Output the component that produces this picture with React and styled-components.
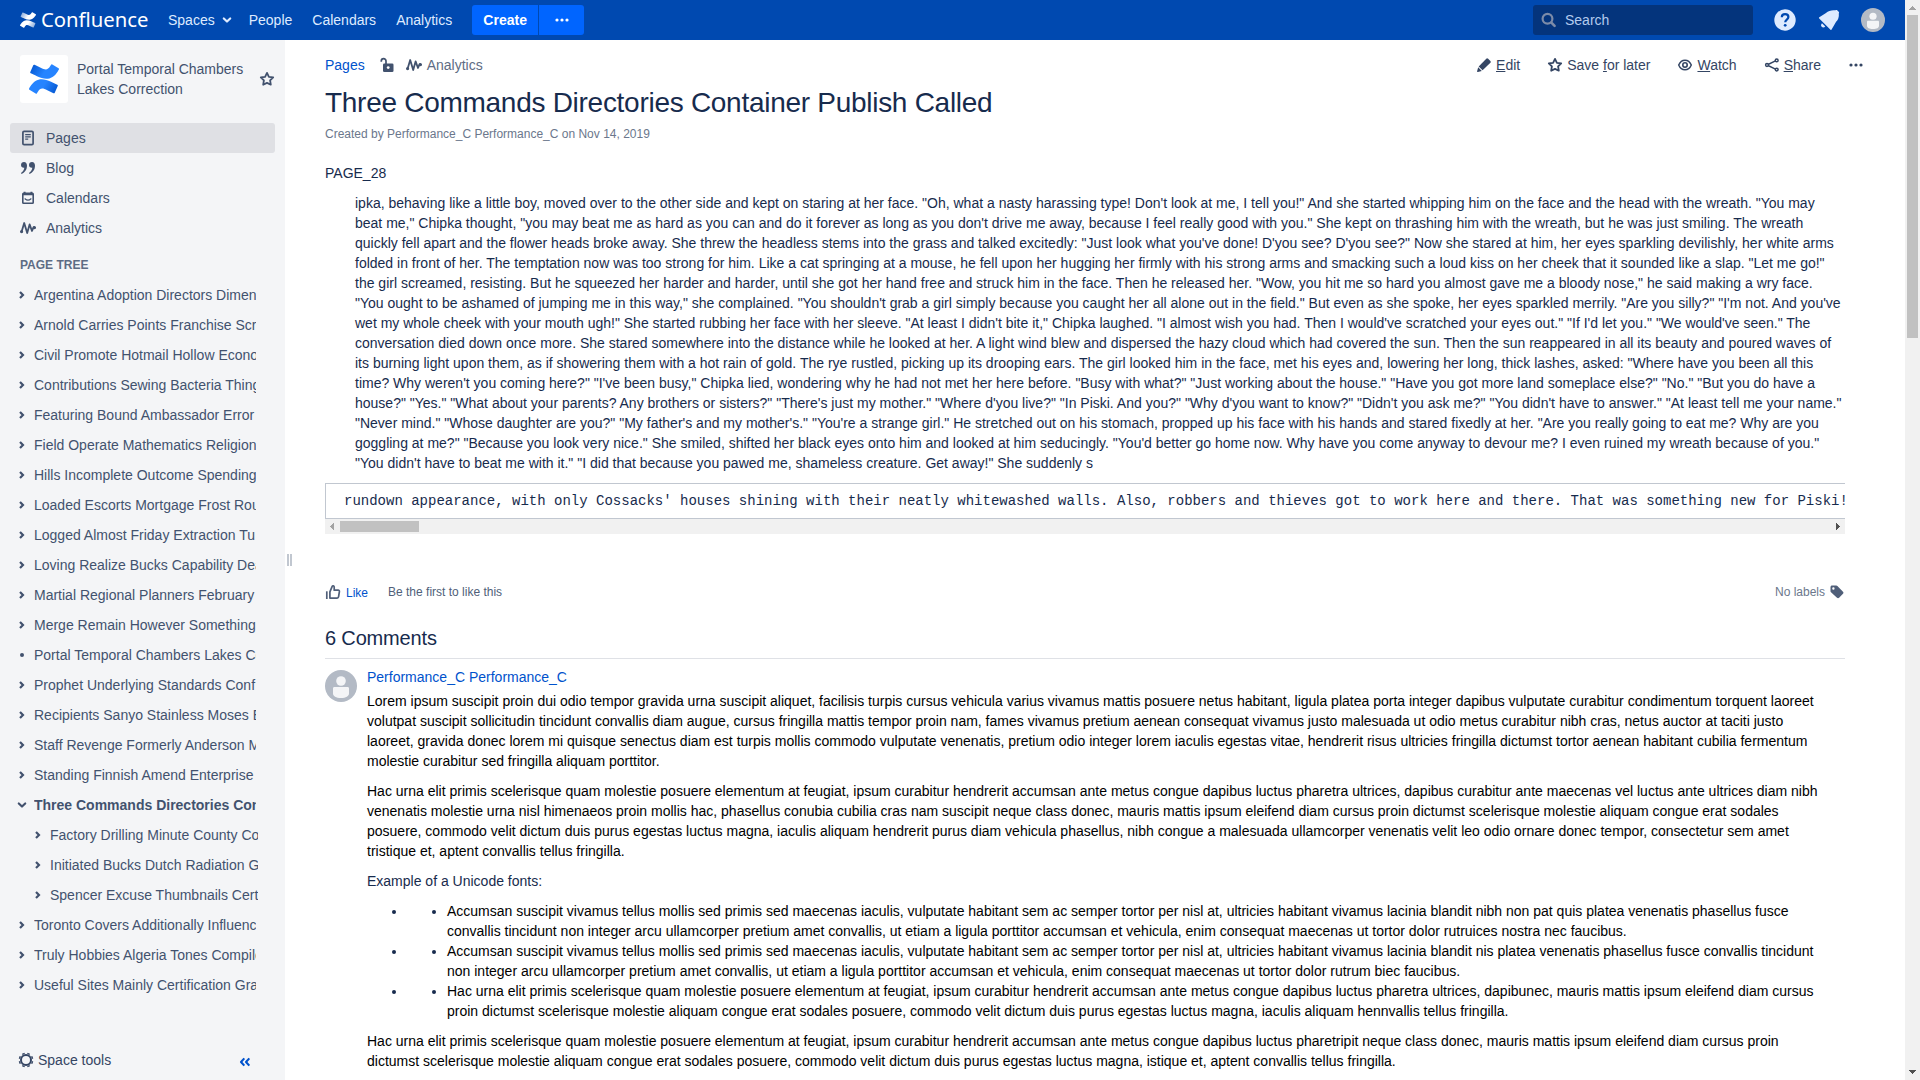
import React from "react";
import styled, { createGlobalStyle, css } from "styled-components";

const Global = createGlobalStyle`
  html, body { margin: 0; padding: 0; height: 100%; overflow: hidden; background: #fff; }
  body { font-family: "Liberation Sans", Arial, sans-serif; font-size: 14px; line-height: 20px; color: #172b4d; }
  * { box-sizing: border-box; }
  svg { display: block; flex: none; }
`;

/* ---------- icons ---------- */

const CONFLUENCE_TOP =
  "M23.131 5.743c.249-.405.531-.875.764-1.25a.764.764 0 0 0-.256-1.034L18.675.404a.764.764 0 0 0-1.058.26c-.195.335-.451.763-.734 1.225-1.966 3.246-3.945 2.85-7.508 1.146L4.437.694a.764.764 0 0 0-1.027.382L1.046 6.422a.764.764 0 0 0 .382 1c1.039.49 3.105 1.467 4.965 2.361 6.698 3.246 12.392 3.029 16.738-4.04z";
const CONFLUENCE_BOTTOM =
  "M.87 18.257c-.248.382-.53.875-.763 1.245a.764.764 0 0 0 .255 1.04l4.965 3.054a.764.764 0 0 0 1.058-.26c.199-.332.454-.763.733-1.221 1.967-3.247 3.945-2.853 7.508-1.146l4.957 2.337a.764.764 0 0 0 1.028-.382l2.364-5.346a.764.764 0 0 0-.382-1 599.851 599.851 0 0 1-4.965-2.361C10.911 10.97 5.224 11.185.87 18.257z";

const ConfluenceMark = ({ size, id, from, to }) => (
  <svg width={size} height={size} viewBox="0 0 24 24">
    <defs>
      <linearGradient id={`${id}a`} x1="0" y1="0" x2="1" y2="0.3">
        <stop offset="0" stopColor={from} />
        <stop offset="0.6" stopColor={to} />
      </linearGradient>
      <linearGradient id={`${id}b`} x1="1" y1="1" x2="0" y2="0.7">
        <stop offset="0" stopColor={from} />
        <stop offset="0.6" stopColor={to} />
      </linearGradient>
    </defs>
    <path d={CONFLUENCE_TOP} fill={`url(#${id}a)`} />
    <path d={CONFLUENCE_BOTTOM} fill={`url(#${id}b)`} />
  </svg>
);

const Icon = ({ children, size = 16 }) => (
  <svg width={size} height={size} viewBox="0 0 16 16" fill="none" stroke="currentColor"
    strokeWidth="1.8" strokeLinecap="round" strokeLinejoin="round">
    {children}
  </svg>
);

const StarIcon = () => (
  <Icon><path d="M8 1.900l1.900 3.900 4.300.6-3.100 3 .7 4.300L8 11.900l-3.800 1.800.7-4.300-3.100-3 4.300-.6z" /></Icon>
);
const WaveIcon = () => (
  <Icon>
    <path d="M1.600 11.800L4.200 3l3 10L9.600 4.400l2.400 6.600 1.600-3.900 1.200.7" />
    <circle cx="1.600" cy="11.600" r=".7" fill="currentColor" />
    <circle cx="14.400" cy="7.600" r=".7" fill="currentColor" />
  </Icon>
);
const PageIcon = () => (
  <Icon>
    <rect x="2.900" y="1.400" width="10.200" height="13.200" rx="1.200" strokeWidth="1.700" />
    <path d="M5.200 4.700h5.600M5.200 6.900h5.600M5.200 9.200h3" strokeWidth="1.200" strokeLinecap="butt" />
  </Icon>
);
const QuoteIcon = () => (
  <Icon>
    <g fill="currentColor" stroke="none">
      <path d="M4 2C2.200 2 1 3.300 1 5s1.200 2.800 2.800 2.800c.2 0 .3 0 .5-.1-.2 2-1.200 3.700-3.100 5v1.300C4.900 12.700 7 9.400 7 5.700 7 3.500 5.900 2 4 2z" />
      <path d="M12 2c-1.800 0-3 1.300-3 3s1.200 2.800 2.800 2.800c.2 0 .3 0 .5-.1-.2 2-1.200 3.700-3.100 5v1.300c3.700-1.300 5.800-4.600 5.800-8.300C15 3.500 13.900 2 12 2z" />
    </g>
  </Icon>
);
const CalendarIcon = () => (
  <Icon>
    <rect x="2.800" y="3.200" width="10.400" height="10" rx=".8" strokeWidth="1.600" />
    <path d="M3 4.400h10M4.600 1.800v1.500M11.400 1.800v1.500" strokeWidth="1.900" strokeLinecap="butt" />
    <path d="M5 8.800q3 2.800 6 0" strokeWidth="1.200" />
  </Icon>
);
const ChevronRight = () => (
  <Icon><path d="M6 4.900L9 8l-3 3.100" strokeWidth="2.200" strokeLinecap="butt" strokeLinejoin="miter" /></Icon>
);
const ChevronDown = () => (
  <Icon><path d="M4.800 6.500L8 9.500l3.200-3" strokeWidth="2.200" /></Icon>
);
const BulletIcon = () => (
  <Icon><circle cx="8" cy="8" r="2" fill="currentColor" stroke="none" /></Icon>
);
const UnlockIcon = () => (
  <Icon>
    <rect x="4" y="6.500" width="10.500" height="8.500" rx="1.300" fill="currentColor" stroke="none" />
    <circle cx="9.200" cy="10.600" r="1.400" fill="#fff" stroke="none" />
    <path d="M2.300 4.800V4a2.300 2.300 0 0 1 4.700 0v3" strokeWidth="1.700" strokeLinecap="butt" />
  </Icon>
);
const PencilIcon = () => (
  <Icon>
    <g fill="currentColor" stroke="none">
      <path d="M10.300 1.700a1.300 1.300 0 0 1 1.800 0l2.300 2.300a1.300 1.300 0 0 1 0 1.800L6.600 13.300 2.700 9.400z" />
      <path d="M2.200 10.200l3.600 3.700-3.900 1.100c-.6.200-1-.2-.8-.8z" />
    </g>
  </Icon>
);
const EyeIcon = () => (
  <Icon>
    <path d="M1.700 8C3 5 5.300 3.200 8 3.200S13 5 14.300 8C13 11 10.700 12.800 8 12.800S3 11 1.700 8z" strokeWidth="1.500" />
    <circle cx="8" cy="8" r="2.200" strokeWidth="1.600" />
  </Icon>
);
const ShareIcon = () => (
  <Icon>
    <path d="M3 8l9.500-4.600M3 8l9.500 4.600" strokeWidth="1.400" />
    <circle cx="3" cy="8" r="1.400" fill="#fff" strokeWidth="1.500" />
    <circle cx="12.700" cy="3.400" r="1.400" fill="#fff" strokeWidth="1.500" />
    <circle cx="12.700" cy="12.600" r="1.400" fill="#fff" strokeWidth="1.500" />
  </Icon>
);
const DotsIcon = () => (
  <Icon>
    <g fill="currentColor" stroke="none">
      <circle cx="3" cy="8" r="1.600" /><circle cx="8" cy="8" r="1.600" /><circle cx="13" cy="8" r="1.600" />
    </g>
  </Icon>
);
const GearIcon = () => (
  <Icon>
    <circle cx="8" cy="8" r="5" strokeWidth="2" />
    <g strokeWidth="2.600" strokeLinecap="butt">
      <path d="M5.700 2.500L5.200 1.200M10.300 2.500l.5-1.300M5.700 13.500l-.5 1.300M10.300 13.500l.5 1.300M2.500 5.700l-1.300-.5M2.500 10.300l-1.300.5M13.500 5.700l1.300-.5M13.500 10.300l1.300.5" />
    </g>
  </Icon>
);
const CollapseIcon = () => (
  <Icon>
    <path d="M7.300 4.400L4 8l3.300 3.600M12.300 4.400L9 8l3.300 3.600" strokeWidth="2.100" strokeLinecap="butt" />
  </Icon>
);
const LikeIcon = () => (
  <Icon>
    <path d="M1.800 7.300v7.700" strokeWidth="1.700" strokeLinecap="butt" />
    <path d="M4.900 14.100V7.800l2.300-5.500c.4-.9 2-.6 2 .6v3.300h3.900c.9 0 1.400.6 1.300 1.500l-.8 5c-.1.800-.7 1.400-1.500 1.400z" strokeWidth="1.700" />
  </Icon>
);
const TagIcon = () => (
  <Icon>
    <path fillRule="evenodd" fill="currentColor" stroke="none"
      d="M1.500 3.200c0-.9.700-1.600 1.600-1.600h4.200c.4 0 .8.200 1.100.5l5.600 5.600c.6.600.6 1.500 0 2.100l-3.900 3.900c-.6.600-1.500.6-2.100 0L2 8.300c-.3-.3-.5-.7-.5-1.100zM5.600 4.500a1.200 1.200 0 1 0-2.400 0 1.200 1.200 0 0 0 2.400 0z" />
  </Icon>
);
const SearchIcon = () => (
  <Icon>
    <circle cx="6.500" cy="6.800" r="4.900" strokeWidth="2.200" />
    <path d="M10.400 10.700L13.600 13.900" strokeWidth="2.600" />
  </Icon>
);
const HelpIcon = () => (
  <svg width="22" height="22" viewBox="0 0 22 22">
    <circle cx="11" cy="11" r="10.700" fill="#deebff" />
    <path d="M7.800 8.300c0-1.900 1.400-3.100 3.300-3.100s3.300 1.200 3.300 2.900c0 2.500-3.200 2.500-3.200 5.100" fill="none" stroke="#0049b0" strokeWidth="2.200" />
    <circle cx="11.200" cy="16.300" r="1.400" fill="#0049b0" />
  </svg>
);
const BellIcon = () => (
  <svg width="22" height="22" viewBox="0 0 22 22" fill="#deebff">
    <path d="M1.300 8.300L8 4c2.500-2.400 6-3.200 9.600-2.700.5-.5 1.300-.4 1.800.1l1.300 1.300c.5.500.5 1.200.1 1.700.4 3.800-.6 6.300-2.700 8.400l-4.500 7.800c-.2.500-.7.500-1.100.1L1.200 9.400c-.4-.4-.4-.8.100-1.100z" />
    <path d="M4 14.200c-1.200 1.200-1.200 2.700-.3 3.600.9.900 2.500.9 3.600-.3z" />
  </svg>
);
const Avatar = ({ size }) => (
  <svg width={size} height={size} viewBox="0 0 32 32">
    <circle cx="16" cy="16" r="16" fill="#b3bac5" />
    <circle cx="16" cy="11" r="4.800" fill="#f4f5f7" />
    <path d="M8 18.500c0-.8.600-1.400 1.400-1.400h13.200c.8 0 1.400.6 1.400 1.400v5c0 2.600-3 4.500-8 4.500s-8-1.900-8-4.500z" fill="#f4f5f7" />
  </svg>
);

/* ---------- shell ---------- */

const Window = styled.div`
  display: grid;
  grid-template-columns: 1905px 15px;
  width: 1920px;
  height: 1080px;
  overflow: hidden;
`;
const Page = styled.div`
  display: grid;
  grid-template-rows: 40px 1040px;
  min-width: 0;
`;
const Columns = styled.div`
  display: grid;
  grid-template-columns: 285px 8px 1fr;
  min-height: 0;
`;

const Track = styled.div`
  display: flex;
  flex-direction: ${(p) => (p.$horizontal ? "row" : "column")};
  justify-content: space-between;
  background: #f1f1f1;
  ${(p) => (p.$horizontal ? "height: 15px;" : "")}
`;
const TrackArrow = styled.div`
  display: grid;
  place-items: center;
  width: 15px;
  height: 15px;
  color: ${(p) => (p.$muted ? "#a3a3a3" : "#505050")};
`;
const Thumb = styled.div`
  background: #c1c1c1;
  ${(p) =>
    p.$horizontal
      ? css`width: 79px; height: 11px; margin: 2px auto 2px 0;`
      : css`width: 11px; height: 323px; margin: 0 2px auto;`}
`;

const ArrowGlyph = ({ d }) => (
  <svg width="15" height="15" viewBox="0 0 15 15" fill="currentColor" shapeRendering="crispEdges"><path d={d} /></svg>
);

/* ---------- header ---------- */

const Header = styled.header`
  display: flex;
  align-items: center;
  padding: 0 20px;
  background: #0049b0;
  color: #deebff;
`;
const Brand = styled.div`
  display: flex;
  align-items: center;
  gap: 5px;
  width: 148px;
  height: 38px;
  color: #fff;
`;
const BrandName = styled.span`
  margin-top: -2px;
  font: 400 20.300px/38px "Noto Sans", "Open Sans", sans-serif;
`;
const Nav = styled.nav`
  display: flex;
  align-items: center;
  gap: 20px;
`;
const NavLink = styled.span`
  display: flex;
  align-items: center;
  gap: 4px;
  svg { margin: 0 -6px 0 0; }
`;
const CreateGroup = styled.div`
  display: flex;
  gap: 1px;
  margin-left: 20px;
`;
const CreateButton = styled.button`
  display: flex;
  align-items: center;
  justify-content: center;
  width: ${(p) => p.$w}px;
  height: 30px;
  padding: 0;
  border: 0;
  background: #0065ff;
  color: #fff;
  font: bold 14px/20px "Liberation Sans", Arial, sans-serif;
  border-radius: ${(p) => (p.$last ? "0 3px 3px 0" : "3px 0 0 3px")};
`;
const SearchBox = styled.div`
  display: flex;
  align-items: center;
  gap: 8px;
  width: 220px;
  height: 30px;
  margin-left: auto;
  padding-left: 8px;
  border-radius: 3px;
  background: #04347c;
  color: #b3cbee;
  svg { color: #7c8ba8; }
`;
const HeaderIcons = styled.div`
  display: grid;
  grid-template-columns: 22px 22px 24px;
  align-items: center;
  margin-left: 21px;
  column-gap: 22px;
  margin-right: -1px;
  svg:last-child { margin-left: -1px; }
`;

/* ---------- sidebar ---------- */

const Sidebar = styled.aside`
  display: flex;
  flex-direction: column;
  min-width: 0;
  background: #f4f5f7;
  color: #42526e;
`;
const SpaceHeader = styled.div`
  display: flex;
  align-items: center;
  height: 48px;
  margin: 15px 10px 20px 20px;
`;
const SpaceLogo = styled.div`
  display: grid;
  place-items: center;
  width: 48px;
  height: 48px;
  border-radius: 3px;
  background: #fff;
`;
const SpaceTitle = styled.div`
  width: 191px;
  padding-left: 9px;
`;
const SideLink = styled.div`
  display: flex;
  align-items: center;
  gap: 10px;
  height: 30px;
  margin: 0 10px;
  padding-left: 10px;
  border-radius: 3px;
  background: ${(p) => (p.$active ? "#dfe0e4" : "transparent")};
`;
const TreeHeading = styled.h5`
  margin: 12px 0 5px 20px;
  font-size: 12px;
  line-height: 20px;
  font-weight: bold;
  color: #5e6c84;
`;
const TreeRow = styled.div`
  display: flex;
  align-items: center;
  gap: 4px;
  height: 30px;
  padding-left: ${(p) => (p.$child ? 30 : 14)}px;
  font-weight: ${(p) => (p.$current ? "bold" : "normal")};
`;
const TreeLabel = styled.span`
  width: ${(p) => (p.$child ? 208 : 222)}px;
  overflow: hidden;
  white-space: nowrap;
`;
const SideFooter = styled.div`
  display: flex;
  align-items: center;
  height: 40px;
  margin-top: auto;
  padding: 0 32px 0 18px;
  gap: 4px;
  color: #344563;
`;
const CollapseToggle = styled.span`
  margin: 4px 0 0 auto;
  color: #0052cc;
`;
const Splitter = styled.div`
  display: flex;
  align-items: center;
  gap: 1px;
  padding-left: 2px;
`;
const Grip = styled.i`
  width: 2px;
  height: 12px;
  background: #c1c7d0;
`;

/* ---------- content ---------- */

const Main = styled.main`
  display: flex;
  flex-direction: column;
  min-width: 0;
  padding: 10px 60px 0 32px;
  overflow: hidden;
  > * { flex: none; }
`;
const Toolbar = styled.div`
  display: flex;
  align-items: center;
  height: 30px;
  margin-right: -19px;
`;
const Crumbs = styled.div`
  display: flex;
  align-items: center;
  color: #42526e;
`;
const Link = styled.a`
  color: #0052cc;
`;
const CrumbIcon = styled.span`
  margin-left: ${(p) => p.$gap}px;
`;
const CrumbText = styled.span`
  margin-left: 5px;
  color: #5e6c84;
`;
const Actions = styled.div`
  display: flex;
  align-items: center;
  gap: 27px;
  margin-left: auto;
  color: #344563;
`;
const Action = styled.span`
  display: flex;
  align-items: center;
  gap: 4px;
`;
const Title = styled.h1`
  margin: 7px 0 0;
  font-size: 28px;
  line-height: 32px;
  font-weight: normal;
  letter-spacing: -0.280px;
  color: #172b4d;
  white-space: nowrap;
`;
const Meta = styled.div`
  margin-top: 5px;
  font-size: 12px;
  color: #6b778c;
`;
const PageName = styled.p`
  margin: 19px 0 10px;
`;
const Lines = styled.p`
  margin: 0 0 10px;
  color: ${(p) => p.$color || "#000"};
  padding-left: ${(p) => p.$indent || 0}px;
  white-space: pre;
`;
const CodeBlock = styled.div`
  width: 1520px;
  overflow: hidden;
`;
const CodeText = styled.pre`
  width: 1700px;
  height: 36px;
  margin: 0;
  padding: 7px 18px;
  border: 1px solid #c1c7d0;
  font: 14px/20px "Liberation Mono", "Courier New", monospace;
`;
const Social = styled.div`
  display: flex;
  align-items: center;
  height: 20px;
  margin-top: 48px;
  font-size: 12px;
  color: #505f79;
`;
const LikeLink = styled(Link)`
  margin: 2px 20px 0 5px;
`;
const Labels = styled.span`
  display: flex;
  align-items: center;
  gap: 4px;
  margin-left: auto;
  color: #6b778c;
  svg { color: #505f79; }
`;
const CommentsHeading = styled.h2`
  margin: 24px 0 0;
  height: 24px;
  font-size: 20px;
  line-height: 24px;
  font-weight: normal;
  letter-spacing: -0.160px;
`;
const Comment = styled.article`
  display: grid;
  grid-template-columns: 32px 1fr;
  gap: 10px;
  margin-top: 8px;
  padding-top: 8px;
  border-top: 1px solid #dfe1e6;
`;
const AvatarSlot = styled.div`
  padding-top: 3px;
`;
const Author = styled(Link)`
  display: block;
  margin-bottom: 4px;
`;
const List = styled.ul`
  margin: 0 0 ${(p) => (p.$nested ? 0 : 10)}px;
  padding-left: 40px;
  list-style: disc;
`;
const ItemText = styled.span`
  color: #000;
  white-space: pre;
`;

/* ---------- data ---------- */

const TREE = [
  ["Argentina Adoption Directors Dimension"],
  ["Arnold Carries Points Franchise Script"],
  ["Civil Promote Hotmail Hollow Economy"],
  ["Contributions Sewing Bacteria Things"],
  ["Featuring Bound Ambassador Error"],
  ["Field Operate Mathematics Religion"],
  ["Hills Incomplete Outcome Spending"],
  ["Loaded Escorts Mortgage Frost Routes"],
  ["Logged Almost Friday Extraction Tu"],
  ["Loving Realize Bucks Capability Deals"],
  ["Martial Regional Planners February"],
  ["Merge Remain However Something"],
  ["Portal Temporal Chambers Lakes Correction", "leaf"],
  ["Prophet Underlying Standards Conf"],
  ["Recipients Sanyo Stainless Moses Edit"],
  ["Staff Revenge Formerly Anderson Mail"],
  ["Standing Finnish Amend Enterprise"],
  ["Three Commands Directories Container", "current"],
  ["Factory Drilling Minute County Core", "child"],
  ["Initiated Bucks Dutch Radiation Guide", "child"],
  ["Spencer Excuse Thumbnails Cert", "child"],
  ["Toronto Covers Additionally Influence"],
  ["Truly Hobbies Algeria Tones Compile"],
  ["Useful Sites Mainly Certification Grade"],
];

const QUOTE = `ipka, behaving like a little boy, moved over to the other side and kept on staring at her face. "Oh, what a nasty harassing type! Don't look at me, I tell you!" And she started whipping him on the face and the head with the wreath. "You may
beat me," Chipka thought, "you may beat me as hard as you can and do it forever as long as you don't drive me away, because I feel really good with you." She kept on thrashing him with the wreath, but he was just smiling. The wreath
quickly fell apart and the flower heads broke away. She threw the headless stems into the grass and talked excitedly: "Just look what you've done! D'you see? D'you see?" Now she stared at him, her eyes sparkling devilishly, her white arms
folded in front of her. The temptation now was too strong for him. Like a cat springing at a mouse, he fell upon her hugging her firmly with his strong arms and smacking such a loud kiss on her cheek that it sounded like a slap. "Let me go!"
the girl screamed, resisting. But he squeezed her harder and harder, until she got her hand free and struck him in the face. Then he released her. "Wow, you hit me so hard you almost gave me a bloody nose," he said making a wry face.
"You ought to be ashamed of jumping me in this way," she complained. "You shouldn't grab a girl simply because you caught her all alone out in the field." But even as she spoke, her eyes sparkled merrily. "Are you silly?" "I'm not. And you've
wet my whole cheek with your mouth ugh!" She started rubbing her face with her sleeve. "At least I didn't bite it," Chipka laughed. "I almost wish you had. Then I would've scratched your eyes out." "If I'd let you." "We would've seen." The
conversation died down once more. She stared somewhere into the distance while he looked at her. A light wind blew and dispersed the hazy cloud which had covered the sun. Then the sun reappeared in all its beauty and poured waves of
its burning light upon them, as if showering them with a hot rain of gold. The rye rustled, picking up its drooping ears. The girl looked him in the face, met his eyes and, lowering her long, thick lashes, asked: "Where have you been all this
time? Why weren't you coming here?" "I've been busy," Chipka lied, wondering why he had not met her here before. "Busy with what?" "Just working about the house." "Have you got more land someplace else?" "No." "But you do have a
house?" "Yes." "What about your parents? Any brothers or sisters?" "There's just my mother." "Where d'you live?" "In Piski. And you?" "Why d'you want to know?" "Didn't you ask me?" "You didn't have to answer." "At least tell me your name."
"Never mind." "Whose daughter are you?" "My father's and my mother's." "You're a strange girl." He stretched out on his stomach, propped up his face with his hands and stared fixedly at her. "Are you really going to eat me? Why are you
goggling at me?" "Because you look very nice." She smiled, shifted her black eyes onto him and looked at him seducingly. "You'd better go home now. Why have you come anyway to devour me? I even ruined my wreath because of you."
"You didn't have to beat me with it." "I did that because you pawed me, shameless creature. Get away!" She suddenly s`;

const CODE =
  "rundown appearance, with only Cossacks' houses shining with their neatly whitewashed walls. Also, robbers and thieves got to work here and there. That was something new for Piski!";

const COMMENT_1 = `Lorem ipsum suscipit proin dui odio tempor gravida urna suscipit aliquet, facilisis turpis cursus vehicula varius vivamus mattis posuere netus habitant, ligula platea porta integer dapibus vulputate curabitur condimentum torquent laoreet
volutpat suscipit sollicitudin tincidunt convallis diam augue, cursus fringilla mattis tempor proin nam, fames vivamus pretium aenean consequat vivamus justo malesuada ut odio metus curabitur nibh cras, netus auctor at taciti justo
laoreet, gravida donec lorem mi quisque senectus diam est turpis mollis commodo vulputate venenatis, pretium odio integer lorem iaculis egestas vitae, hendrerit risus ultricies fringilla dictumst tortor aenean habitant cubilia fermentum
molestie curabitur sed fringilla aliquam porttitor.`;

const COMMENT_2 = `Hac urna elit primis scelerisque quam molestie posuere elementum at feugiat, ipsum curabitur hendrerit accumsan ante metus congue dapibus luctus pharetra ultrices, dapibus curabitur ante maecenas vel luctus ante ultrices diam nibh
venenatis molestie urna nisl himenaeos proin mollis hac, phasellus conubia cubilia cras nam suscipit neque class donec, mauris mattis ipsum eleifend diam cursus proin dictumst scelerisque molestie aliquam congue erat sodales
posuere, commodo velit dictum duis purus egestas luctus magna, iaculis aliquam hendrerit purus diam vehicula phasellus, nibh congue a malesuada ullamcorper venenatis velit leo odio ornare donec tempor, consectetur sem amet
tristique et, aptent convallis tellus fringilla.`;

const ITEMS = [
  `Accumsan suscipit vivamus tellus mollis sed primis sed maecenas iaculis, vulputate habitant sem ac semper tortor per nisl at, ultricies habitant vivamus lacinia blandit nibh non pat quis platea venenatis phasellus fusce
convallis tincidunt non integer arcu ullamcorper pretium amet convallis, ut etiam a ligula porttitor accumsan et vehicula, enim consequat maecenas ut tortor dolor rutruices nostra nec faucibus.`,
  `Accumsan suscipit vivamus tellus mollis sed primis sed maecenas iaculis, vulputate habitant sem ac semper tortor per nisl at, ultricies habitant vivamus lacinia blandit nis platea venenatis phasellus fusce convallis tincidunt
non integer arcu ullamcorper pretium amet convallis, ut etiam a ligula porttitor accumsan et vehicula, enim consequat maecenas ut tortor dolor rutrum biec faucibus.`,
  `Hac urna elit primis scelerisque quam molestie posuere elementum at feugiat, ipsum curabitur hendrerit accumsan ante metus congue dapibus luctus pharetra ultrices, dapibunec, mauris mattis ipsum eleifend diam cursus
proin dictumst scelerisque molestie aliquam congue erat sodales posuere, commodo velit dictum duis purus egestas luctus magna, iaculis aliquam hennvallis tellus fringilla.`,
];

const COMMENT_3 = `Hac urna elit primis scelerisque quam molestie posuere elementum at feugiat, ipsum curabitur hendrerit accumsan ante metus congue dapibus luctus pharetripit neque class donec, mauris mattis ipsum eleifend diam cursus proin
dictumst scelerisque molestie aliquam congue erat sodales posuere, commodo velit dictum duis purus egestas luctus magna, istique et, aptent convallis tellus fringilla.`;

const treeIcon = (kind) =>
  kind === "leaf" ? <BulletIcon /> : kind === "current" ? <ChevronDown /> : <ChevronRight />;

export default function App() {
  return (
    <Window>
      <Global />
      <Page>
        <Header>
          <Brand>
            <ConfluenceMark size={16} id="brand" from="rgba(255,255,255,.45)" to="#fff" />
            <BrandName>Confluence</BrandName>
          </Brand>
          <Nav>
            <NavLink>Spaces <ChevronDown /></NavLink>
            <NavLink>People</NavLink>
            <NavLink>Calendars</NavLink>
            <NavLink>Analytics</NavLink>
          </Nav>
          <CreateGroup>
            <CreateButton $w={66}>Create</CreateButton>
            <CreateButton $w={45} $last><DotsIcon /></CreateButton>
          </CreateGroup>
          <SearchBox><SearchIcon />Search</SearchBox>
          <HeaderIcons><HelpIcon /><BellIcon /><Avatar size={24} /></HeaderIcons>
        </Header>
        <Columns>
          <Sidebar>
            <SpaceHeader>
              <SpaceLogo><ConfluenceMark size={30} id="space" from="#0052cc" to="#2684ff" /></SpaceLogo>
              <SpaceTitle>Portal Temporal Chambers Lakes Correction</SpaceTitle>
              <StarIcon />
            </SpaceHeader>
            <SideLink $active><PageIcon />Pages</SideLink>
            <SideLink><QuoteIcon />Blog</SideLink>
            <SideLink><CalendarIcon />Calendars</SideLink>
            <SideLink><WaveIcon />Analytics</SideLink>
            <TreeHeading>PAGE TREE</TreeHeading>
            {TREE.map(([label, kind]) => (
              <TreeRow key={label} $child={kind === "child"} $current={kind === "current"}>
                {treeIcon(kind)}
                <TreeLabel $child={kind === "child"}>{label}</TreeLabel>
              </TreeRow>
            ))}
            <SideFooter>
              <GearIcon />Space tools
              <CollapseToggle><CollapseIcon /></CollapseToggle>
            </SideFooter>
          </Sidebar>
          <Splitter><Grip /><Grip /></Splitter>
          <Main>
            <Toolbar>
              <Crumbs>
                <Link>Pages</Link>
                <CrumbIcon $gap={14}><UnlockIcon /></CrumbIcon>
                <CrumbIcon $gap={11}><WaveIcon /></CrumbIcon>
                <CrumbText>Analytics</CrumbText>
              </Crumbs>
              <Actions>
                <Action><PencilIcon /><span><u>E</u>dit</span></Action>
                <Action><StarIcon /><span>Save <u>f</u>or later</span></Action>
                <Action><EyeIcon /><span><u>W</u>atch</span></Action>
                <Action><ShareIcon /><span><u>S</u>hare</span></Action>
                <Action><DotsIcon /></Action>
              </Actions>
            </Toolbar>
            <Title>Three Commands Directories Container Publish Called</Title>
            <Meta>Created by Performance_C Performance_C on Nov 14, 2019</Meta>
            <PageName>PAGE_28</PageName>
            <Lines $indent={30} $color="#172b4d">{QUOTE}</Lines>
            <CodeBlock>
              <CodeText>{CODE}</CodeText>
              <Track $horizontal>
                <TrackArrow $muted><ArrowGlyph d="M9 4v7L5 7.500z" /></TrackArrow>
                <Thumb $horizontal />
                <TrackArrow><ArrowGlyph d="M6 4v7l4-3.500z" /></TrackArrow>
              </Track>
            </CodeBlock>
            <Social>
              <LikeIcon /><LikeLink>Like</LikeLink>Be the first to like this
              <Labels>No labels<TagIcon /></Labels>
            </Social>
            <CommentsHeading>6 Comments</CommentsHeading>
            <Comment>
              <AvatarSlot><Avatar size={32} /></AvatarSlot>
              <div>
                <Author>Performance_C Performance_C</Author>
                <Lines>{COMMENT_1}</Lines>
                <Lines>{COMMENT_2}</Lines>
                <Lines $color="#172b4d">Example of a Unicode fonts:</Lines>
                <List>
                  {ITEMS.map((text) => (
                    <li key={text}>
                      <List $nested><li><ItemText>{text}</ItemText></li></List>
                    </li>
                  ))}
                </List>
                <Lines>{COMMENT_3}</Lines>
              </div>
            </Comment>
          </Main>
        </Columns>
      </Page>
      <Track>
        <TrackArrow $muted><ArrowGlyph d="M4 10h7L7.500 6z" /></TrackArrow>
        <Thumb />
        <TrackArrow><ArrowGlyph d="M4 5h7L7.500 9z" /></TrackArrow>
      </Track>
    </Window>
  );
}
